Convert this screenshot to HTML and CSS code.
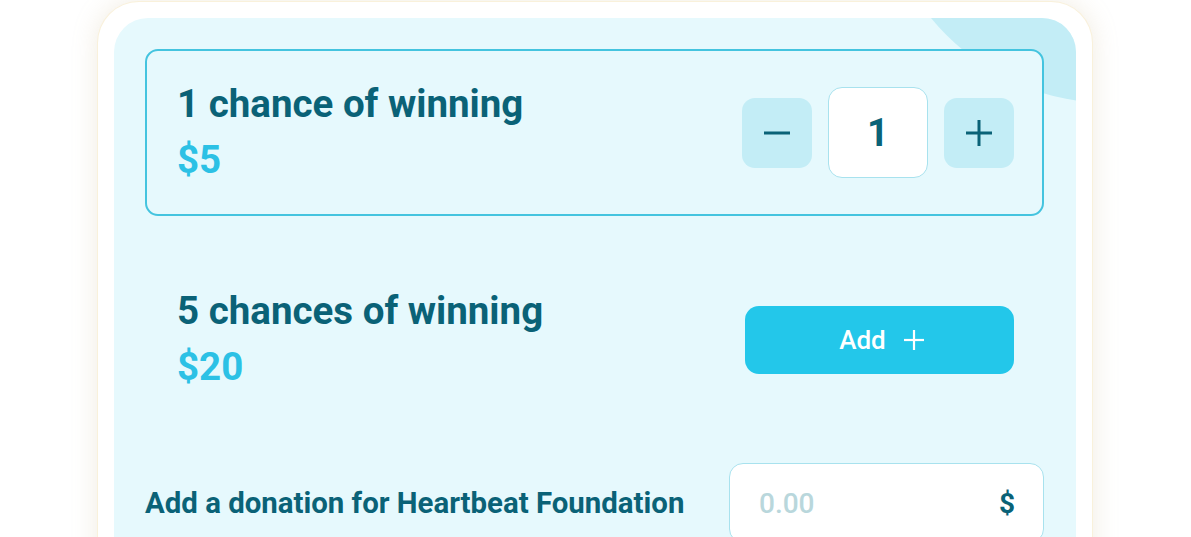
FILE: index.html
```html
<!DOCTYPE html>
<html lang="en">
<head>
<meta charset="utf-8">
<title>Tickets</title>
<link rel="stylesheet" href="styles.css">
</head>
<body>
<div class="frame">
  <div class="panel">
    <div class="blob"></div>
    <div class="option option--selected">
      <div class="option-text">
        <div class="option-title">1 chance of winning</div>
        <div class="option-price">$5</div>
      </div>
      <div class="stepper">
        <button class="step-btn" aria-label="Decrease">
          <svg width="26" height="26" viewBox="0 0 26 26"><line x1="0" y1="13" x2="26" y2="13" stroke="#0a6277" stroke-width="3"/></svg>
        </button>
        <div class="step-value">1</div>
        <button class="step-btn" aria-label="Increase">
          <svg width="26" height="26" viewBox="0 0 26 26"><line x1="0" y1="13" x2="26" y2="13" stroke="#0a6277" stroke-width="3"/><line x1="13" y1="0" x2="13" y2="26" stroke="#0a6277" stroke-width="3"/></svg>
        </button>
      </div>
    </div>
    <div class="option">
      <div class="option-text">
        <div class="option-title">5 chances of winning</div>
        <div class="option-price">$20</div>
      </div>
      <button class="add-btn">
        <span>Add</span>
        <svg width="20" height="20" viewBox="0 0 20 20"><line x1="0" y1="10" x2="20" y2="10" stroke="#ffffff" stroke-width="2.2"/><line x1="10" y1="0" x2="10" y2="20" stroke="#ffffff" stroke-width="2.2"/></svg>
      </button>
    </div>
    <div class="donation">
      <div class="donation-label">Add a donation for Heartbeat Foundation</div>
      <div class="donation-input">
        <span class="placeholder">0.00</span>
        <span class="currency">$</span>
      </div>
    </div>
  </div>
</div>
</body>
</html>
```

FILE: styles.css
```css
* { box-sizing: border-box; }

html, body {
  margin: 0;
  padding: 0;
  background: #ffffff;
  overflow: hidden;
}

body {
  font-family: Roboto, "Liberation Sans", sans-serif;
  padding: 1px 1px 0 0;
}

.frame {
  width: 996px;
  margin: 0 auto;
  background: #ffffff;
  border-radius: 42px;
  padding: 16px;
  border: 1px solid rgba(245, 232, 195, 0.6);
  box-shadow: 0 0 26px rgba(190, 170, 120, 0.22);
}

.panel {
  position: relative;
  overflow: hidden;
  background: #e6f9fd;
  border-radius: 34px;
  padding: 31px 32px 40px 31px;
  display: flex;
  flex-direction: column;
  gap: 40px;
  min-height: 620px;
}

.blob {
  position: absolute;
  width: 462px;
  height: 462px;
  border-radius: 50%;
  background: #c3edf6;
  right: -265px;
  top: -377px;
}

.option {
  position: relative;
  height: 167px;
  border: 2px solid transparent;
  border-radius: 13px;
  padding: 0 28px 0 30px;
  display: flex;
  align-items: center;
  justify-content: space-between;
}

.option--selected {
  border-color: #44c4df;
  background: #e6f9fd;
}

.option-text {
  display: flex;
  flex-direction: column;
  gap: 12px;
  margin-top: -2px;
}

.option-title {
  font-size: 38.5px;
  line-height: 44px;
  font-weight: 700;
  color: #0a6277;
}

.option-price {
  font-size: 38.5px;
  line-height: 44px;
  font-weight: 700;
  color: #2cc1e5;
}

.stepper {
  display: flex;
  align-items: center;
  gap: 16px;
}

.step-btn {
  width: 70px;
  height: 70px;
  border: none;
  border-radius: 13px;
  background: #c3edf6;
  display: flex;
  align-items: center;
  justify-content: center;
  padding: 0;
}

.step-value {
  width: 100px;
  height: 91px;
  background: #ffffff;
  border: 1.5px solid #a8e2ee;
  border-radius: 14px;
  display: flex;
  align-items: center;
  justify-content: center;
  font-size: 38px;
  font-weight: 700;
  color: #0a6277;
}

.add-btn {
  width: 269px;
  height: 68px;
  border: none;
  border-radius: 14px;
  background: #23c7ea;
  color: #ffffff;
  font-family: Roboto, "Liberation Sans", sans-serif;
  font-size: 26px;
  font-weight: 500;
  display: flex;
  align-items: center;
  justify-content: center;
  gap: 18px;
  padding: 0 0 0 4px;
}

.donation {
  display: flex;
  align-items: center;
  justify-content: space-between;
}

.donation-label {
  font-size: 29.4px;
  font-weight: 700;
  color: #0a6277;
}

.donation-input {
  width: 315px;
  height: 80px;
  background: #ffffff;
  border: 1.5px solid #a8e2ee;
  border-radius: 14px;
  display: flex;
  align-items: center;
  justify-content: space-between;
  padding: 0 28px 0 29px;
}

.placeholder {
  font-size: 28px;
  font-weight: 500;
  color: #b9d7dc;
}

.currency {
  font-size: 28px;
  font-weight: 700;
  color: #0a6277;
}
```
